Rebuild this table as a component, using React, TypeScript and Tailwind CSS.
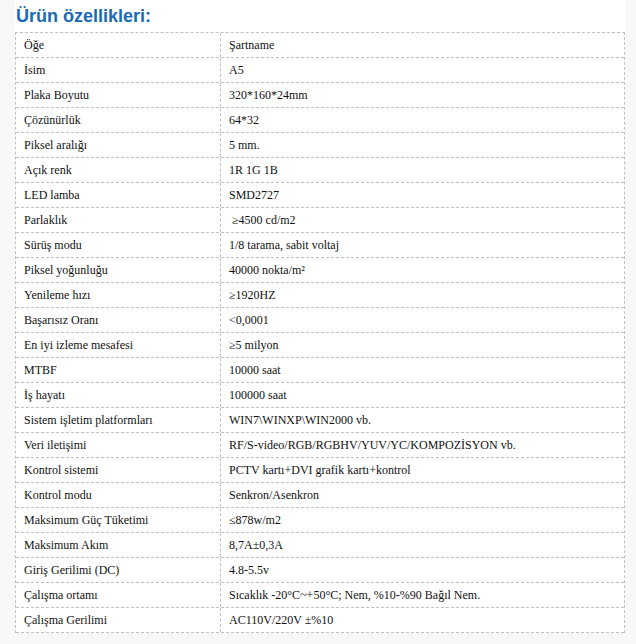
import React from "react";

const rows: [string, string][] = [
  ["Öğe", "Şartname"],
  ["İsim", "A5"],
  ["Plaka Boyutu", "320*160*24mm"],
  ["Çözünürlük", "64*32"],
  ["Piksel aralığı", "5 mm."],
  ["Açık renk", "1R 1G 1B"],
  ["LED lamba", "SMD2727"],
  ["Parlaklık", "\u00a0≥4500 cd/m2"],
  ["Sürüş modu", "1/8 tarama, sabit voltaj"],
  ["Piksel yoğunluğu", "40000 nokta/m²"],
  ["Yenileme hızı", "≥1920HZ"],
  ["Başarısız Oranı", "<0,0001"],
  ["En iyi izleme mesafesi", "≥5 milyon"],
  ["MTBF", "10000 saat"],
  ["İş hayatı", "100000 saat"],
  ["Sistem işletim platformları", "WIN7\\WINXP\\WIN2000 vb."],
  ["Veri iletişimi", "RF/S-video/RGB/RGBHV/YUV/YC/KOMPOZİSYON vb."],
  ["Kontrol sistemi", "PCTV kartı+DVI grafik kartı+kontrol"],
  ["Kontrol modu", "Senkron/Asenkron"],
  ["Maksimum Güç Tüketimi", "≤878w/m2"],
  ["Maksimum Akım", "8,7A±0,3A"],
  ["Giriş Gerilimi (DC)", "4.8-5.5v"],
  ["Çalışma ortamı", "Sıcaklık -20°C~+50°C; Nem, %10-%90 Bağıl Nem."],
  ["Çalışma Gerilimi", "AC110V/220V ±%10"],
];

export default function App() {
  return (
    <div className="w-[636px] h-[644px] bg-[#f8f8f8] overflow-hidden">
      <div className="ml-[15px] w-[610px] bg-white">
        <div
          className="h-[32px] pt-[6px] pl-[1px] text-[18px] leading-[21px] font-bold text-[#1b6ab5]"
          style={{ fontFamily: '"Liberation Sans", Arial, sans-serif' }}
        >
          Ürün özellikleri:
        </div>
        <div
          className="border-t border-l border-r border-dashed border-[#c0c0c0] text-[12px] text-[#111]"
          style={{ fontFamily: '"Liberation Serif", "Times New Roman", serif' }}
        >
          {rows.map(([k, v], i) => (
            <div
              key={i}
              className="flex h-[25px] border-b border-dashed border-[#c0c0c0]"
            >
              <div className="w-[205px] shrink-0 border-r border-dashed border-[#c0c0c0] pl-[8px] flex items-center whitespace-nowrap">
                {k}
              </div>
              <div className="flex-1 pl-[8px] flex items-center whitespace-nowrap">
                {v}
              </div>
            </div>
          ))}
        </div>
      </div>
    </div>
  );
}
